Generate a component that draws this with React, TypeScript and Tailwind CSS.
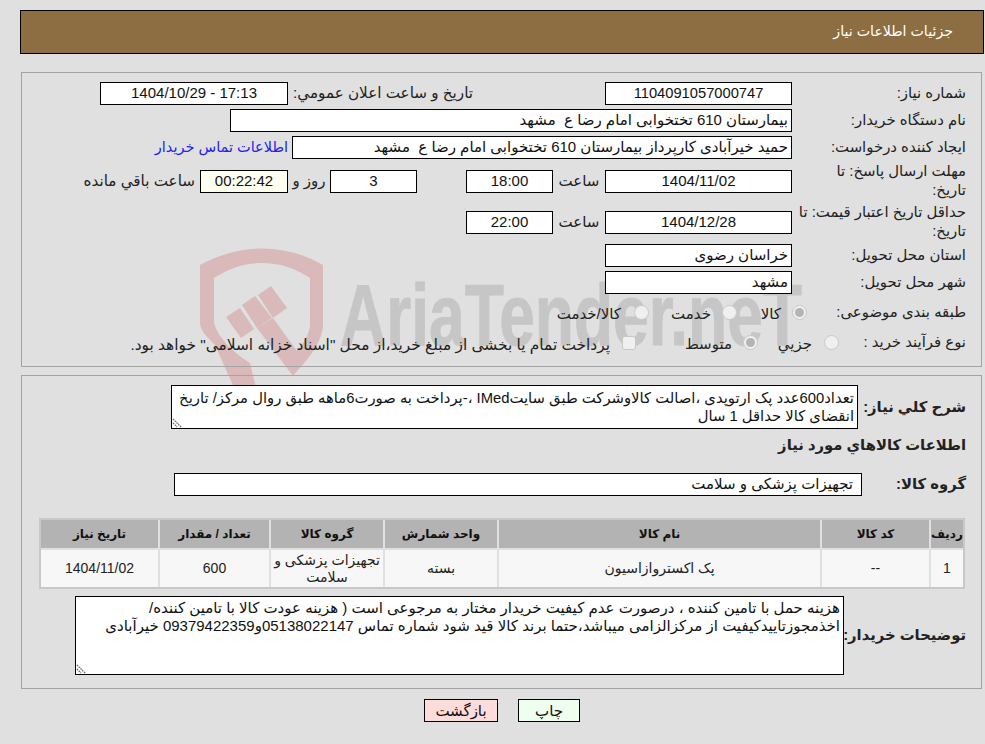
import type { ReactNode } from "react"

const font = "font-['Liberation_Sans','DejaVu_Sans',sans-serif]"

function Field({ className, children }: { className: string; children?: ReactNode }) {
  return (
    <div className={`flex h-[23px] shrink-0 items-center border border-black bg-white px-[3px] whitespace-nowrap ${className}`}>
      {children}
    </div>
  )
}

function Row({ label, height = "h-[23px]", top = "mt-1", children }: { label: ReactNode; height?: string; top?: string; children?: ReactNode }) {
  return (
    <div className={`flex items-center ${height} ${top}`}>
      <div className="w-[174px] shrink-0 text-[14.9px] leading-[19px] whitespace-nowrap text-[#222]">{label}</div>
      {children}
    </div>
  )
}

function Radio({ checked }: { checked?: boolean }) {
  return (
    <span className="flex h-[15px] w-[15px] shrink-0 items-center justify-center rounded-full border border-[#c8c8c8] bg-[#f0f0f0]">
      {checked && <span className="h-[9px] w-[9px] rounded-full bg-[#b4b4b4]" />}
    </span>
  )
}

function ResizeHandle() {
  return (
    <svg className="absolute bottom-0 left-0" width="11" height="11" viewBox="0 0 11 11">
      <path d="M1 2 9 10M1 6 5 10" stroke="#666" strokeWidth="1.3" strokeDasharray="1.5 1" />
      <path d="M2 2 10 10M2 6 6 10" stroke="#ccc" strokeWidth="0.8" />
    </svg>
  )
}

function Watermark() {
  return (
    <svg className="absolute left-0 top-0" width="985" height="744" viewBox="0 0 985 744">
      <path
        d="M200 265C240 243 285 243 323 265L323 325C322 345 305 362 293 376L286 362C298 350 308 340 310 326L310 278C280 258 244 258 214 278L214 322C216 335 232 352 250 363L257 392L236 392L215 345C205 335 200 330 200 322Z"
        fill="#d9b9b9"
      />
      <g fill="#d9b9b9">
        <path d="M226 317 240 308 254 329 241 338Z" />
        <path d="M242 305 255 296 272 318 257 328Z" />
        <path d="M258 295 271 286 287 308 273 318Z" />
        <path d="M257 328 273 318 302 358 293 376Z" />
      </g>
      <text
        x="340"
        y="345"
        direction="ltr"
        textLength="462"
        lengthAdjust="spacingAndGlyphs"
        fontFamily="'Liberation Sans', sans-serif"
        fontWeight="700"
        fontSize="88"
        stroke="#c6c6c6"
        strokeWidth="1"
        fill="#c6c6c6"
      >
        AriaTender.neT
      </text>
    </svg>
  )
}

const headers = ["ردیف", "کد کالا", "نام کالا", "واحد شمارش", "گروه کالا", "تعداد / مقدار", "تاریخ نیاز"]
const cells: ReactNode[] = ["1", "--", "پک اکستروازاسیون", "بسته", <>تجهیزات پزشکی و<br />سلامت</>, "600", "1404/11/02"]

export default function App() {
  return (
    <div dir="rtl" className={`relative h-[744px] w-[985px] overflow-hidden bg-[#e0e0e0] text-[15px] text-[#111] ${font}`}>
      <Watermark />
      <div className="relative">
        <div className="ml-[20px] mr-px mt-[10px] flex h-[44px] items-center border border-black bg-[#8d6e42] pr-[30px] text-[14.2px] text-white">
          جزئیات اطلاعات نیاز
        </div>

        <div className="ml-[21px] mr-[3px] mt-[18px] h-[295px] border border-[#a3a3a3] pr-[15px] pt-[9px]">
          <Row label="شماره نیاز:" top="mt-0">
            <Field className="w-[187px] justify-center text-[14.7px]">1104091057000747</Field>
            <div className="w-[132px] shrink-0" />
            <div className="w-[185px] shrink-0 whitespace-nowrap text-[15.2px] text-[#222]">تاریخ و ساعت اعلان عمومي:</div>
            <Field className="w-[188px] justify-center">17:13 - 1404/10/29</Field>
          </Row>
          <Row label="نام دستگاه خریدار:">
            <Field className="w-[562px]">بیمارستان 610 تختخوابی امام رضا ع&nbsp; مشهد</Field>
          </Row>
          <Row label="ایجاد کننده درخواست:">
            <Field className="w-[500px]">حمید خیرآبادی کارپرداز بیمارستان 610 تختخوابی امام رضا ع&nbsp; مشهد</Field>
            <a className="mr-1 whitespace-nowrap text-[14.5px] text-[#2222ee]">اطلاعات تماس خریدار</a>
          </Row>
          <Row label={<>مهلت ارسال پاسخ: تا<br />تاریخ:</>} height="h-[36px]" top="mt-[4px]">
            <Field className="w-[187px] justify-center">1404/11/02</Field>
            <div className="w-[52px] shrink-0 text-center text-[#222]">ساعت</div>
            <Field className="w-[87px] justify-center">18:00</Field>
            <div className="w-[49px] shrink-0" />
            <Field className="w-[87px] justify-center">3</Field>
            <div className="w-[42px] shrink-0 text-center text-[#222]">روز و</div>
            <Field className="w-[88px] justify-center !bg-[#fffff0]">00:22:42</Field>
            <div className="mr-[5px] whitespace-nowrap text-[15.2px] text-[#222]">ساعت باقي مانده</div>
          </Row>
          <Row label={<>حداقل تاریخ اعتبار قیمت: تا<br />تاریخ:</>} height="h-[36px]" top="mt-[5px]">
            <Field className="w-[187px] justify-center">1404/12/28</Field>
            <div className="w-[52px] shrink-0 text-center text-[#222]">ساعت</div>
            <Field className="w-[87px] justify-center">22:00</Field>
          </Row>
          <Row label="استان محل تحویل:">
            <Field className="w-[187px]">خراسان رضوی</Field>
          </Row>
          <Row label="شهر محل تحویل:">
            <Field className="w-[187px]">مشهد</Field>
          </Row>
          <Row label="طبقه بندی موضوعی:" top="mt-[7px]">
            <div className="mr-[-15px] flex items-center whitespace-nowrap text-[#222]">
              <Radio checked />
              <span className="mr-[11px] mt-1 w-[44px]">کالا</span>
              <Radio />
              <span className="mr-[11px] mt-1 w-[62px]">خدمت</span>
              <Radio />
              <span className="mr-[13px] mt-1">کالا/خدمت</span>
            </div>
          </Row>
          <Row label="نوع فرآیند خرید :" top="mt-[7px]">
            <div className="mr-[-47px] flex items-center whitespace-nowrap text-[#222]">
              <Radio />
              <span className="mr-[12px] mt-1 w-[54px]">جزيي</span>
              <Radio checked />
              <span className="mr-[11px] mt-1 w-[96px]">متوسط</span>
              <span className="h-[14px] w-[14px] shrink-0 rounded-[3px] border border-[#c8c8c8] bg-[#f0f0f0]" />
              <span className="mr-[12px] mt-1 text-[15.4px]">پرداخت تمام یا بخشی از مبلغ خرید،از محل "اسناد خزانه اسلامی" خواهد بود.</span>
            </div>
          </Row>
        </div>

        <div className="ml-[21px] mr-[3px] mt-[8px] h-[314px] border border-[#a3a3a3] pr-[15px] pt-[9px]">
          <div className="flex h-[44px] items-center">
            <div className="w-[108px] shrink-0 whitespace-nowrap text-[14.8px] font-bold text-[#222]">شرح کلي نياز:</div>
            <div className="relative h-[44px] w-[687px] border border-black bg-white px-[3px] pt-[3px] text-[14.8px] leading-[18px] whitespace-nowrap">
              <div>تعداد600عدد پک ارتوپدی ،اصالت کالاوشرکت طبق سایتIMed ،-پرداخت به صورت6ماهه طبق روال مرکز/ تاریخ</div>
              <div>انقضای کالا حداقل 1 سال</div>
              <ResizeHandle />
            </div>
          </div>
          <div className="mt-[5px] h-[20px] text-[14.8px] font-bold text-[#222]">اطلاعات کالاهاي مورد نياز</div>
          <div className="mt-[19px] flex items-center">
            <div className="w-[104px] shrink-0 whitespace-nowrap text-[14.8px] font-bold text-[#222]">گروه کالا:</div>
            <Field className="w-[688px] pr-2">تجهیزات پزشکی و سلامت</Field>
          </div>
          <div className="mr-[1px] mt-[22px] grid w-[926px] grid-cols-[32px_107px_321px_112px_112px_109px_117px] gap-[2px] border-2 border-[#c8c8c8] text-center">
            {headers.map((h) => (
              <div key={h} className="flex h-[28px] items-center justify-center whitespace-nowrap bg-[#b3b3b3] text-[12px] font-bold text-[#111]">
                {h}
              </div>
            ))}
            {cells.map((c, i) => (
              <div key={i} className="flex h-[37px] items-center justify-center bg-[#f7f7f7] text-[14px] leading-[17px] text-[#222]">
                <div>{c}</div>
              </div>
            ))}
          </div>
          <div className="mt-[7px] flex items-center">
            <div className="w-[122px] shrink-0 whitespace-nowrap text-[14.8px] font-bold text-[#222]">توضیحات خریدار:</div>
            <div className="relative h-[79px] w-[769px] border border-black bg-white px-[3px] pt-[2px] leading-[18px] whitespace-nowrap">
              <div>هزینه حمل با تامین کننده ، درصورت عدم کیفیت خریدار مختار به مرجوعی است ( هزینه عودت کالا با تامین کننده/</div>
              <div>اخذمجوزتاییدکیفیت از مرکزالزامی میباشد،حتما برند کالا قید شود شماره تماس 05138022147و09379422359 خیرآبادی</div>
              <ResizeHandle />
            </div>
          </div>
        </div>

        <div className="mt-[10px] flex gap-[20px] pr-[405px]">
          <button className="h-[23px] w-[62px] border border-black bg-[#efffef] text-[#111]">چاپ</button>
          <button className="h-[23px] w-[74px] border border-black bg-[#ffdcdc] text-[#111]">بازگشت</button>
        </div>
      </div>
    </div>
  )
}
